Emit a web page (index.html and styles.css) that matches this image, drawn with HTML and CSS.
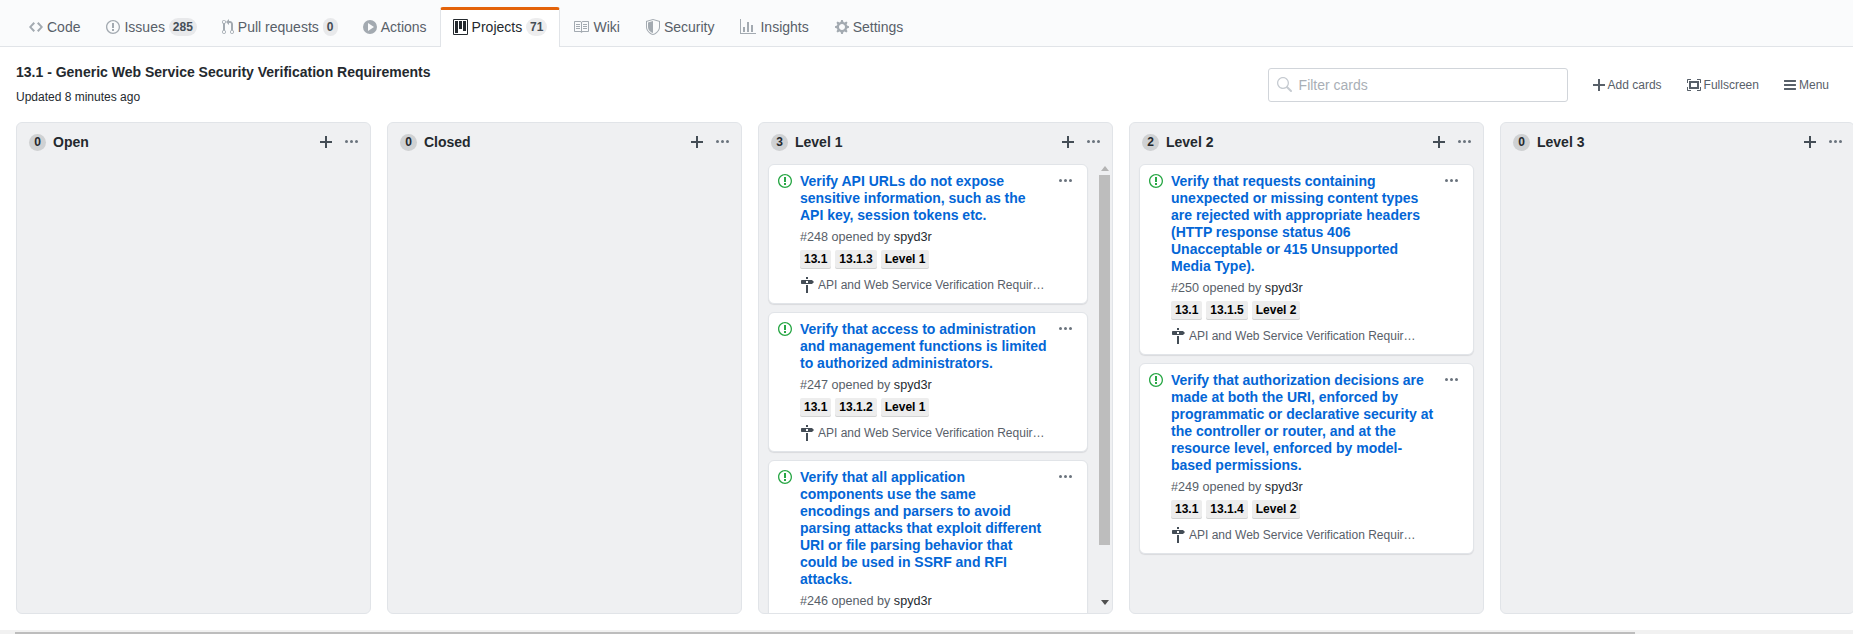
FILE: index.html
```html
<!DOCTYPE html>
<html>
<head>
  <title>13.1 - Generic Web Service Security Verification Requirements</title>
  <link rel="stylesheet" href="styles.css">
</head>
<body>
  <svg class="sprite">
    <symbol id="i-code" viewBox="0 0 14 16"><path d="M9.5 3L8 4.5 11.5 8 8 11.5 9.5 13 14 8 9.5 3zm-5 0L0 8l4.5 5L6 11.5 2.5 8 6 4.5 4.5 3z"/></symbol>
    <symbol id="i-issue" viewBox="0 0 14 16"><path fill-rule="evenodd" d="M7 2.3c3.14 0 5.7 2.56 5.7 5.7s-2.56 5.7-5.7 5.7A5.71 5.71 0 0 1 1.3 8c0-3.14 2.56-5.7 5.7-5.7zM7 1C3.14 1 0 4.14 0 8s3.14 7 7 7 7-3.14 7-7-3.14-7-7-7zm1 3H6v5h2V4zm0 6H6v2h2v-2z"/></symbol>
    <symbol id="i-pr" viewBox="0 0 12 16"><path fill-rule="evenodd" d="M11 11.28V5c-.03-.78-.34-1.47-.94-2.06C9.46 2.35 8.78 2.03 8 2H7V0L4 3l3 3V4h1c.27.02.48.11.69.31.21.2.3.42.31.69v6.28A1.993 1.993 0 0 0 10 15a1.993 1.993 0 0 0 1-3.72zm-1 2.92c-.66 0-1.2-.55-1.2-1.2 0-.65.55-1.2 1.2-1.2.65 0 1.2.55 1.2 1.2 0 .65-.55 1.2-1.2 1.2zM4 3c0-1.11-.89-2-2-2a1.993 1.993 0 0 0-1 3.72v6.56A1.993 1.993 0 0 0 2 15a1.993 1.993 0 0 0 1-3.72V4.72c.59-.34 1-.98 1-1.72zm-.8 10c0 .66-.55 1.2-1.2 1.2-.65 0-1.2-.55-1.2-1.2 0-.65.55-1.2 1.2-1.2.65 0 1.2.55 1.2 1.2zM2 4.2C1.34 4.2.8 3.65.8 3c0-.65.55-1.2 1.2-1.2.65 0 1.2.55 1.2 1.2 0 .65-.55 1.2-1.2 1.2z"/></symbol>
    <symbol id="i-play" viewBox="0 0 14 16"><path fill-rule="evenodd" d="M14 8A7 7 0 1 1 0 8a7 7 0 0 1 14 0zM5 12l6-4-6-4v8z"/></symbol>
    <symbol id="i-project" viewBox="0 0 15 16"><path fill-rule="evenodd" d="M10 12h3V2h-3v10zm-4-2h3V2H6v8zm-4 4h3V2H2v12zm-1 1h13V1H1v14zM14 0H1a1 1 0 0 0-1 1v14a1 1 0 0 0 1 1h13a1 1 0 0 0 1-1V1a1 1 0 0 0-1-1z"/></symbol>
    <symbol id="i-book" viewBox="0 0 16 16"><path fill-rule="evenodd" d="M3 5h4v1H3V5zm0 3h4V7H3v1zm0 2h4V9H3v1zm11-5h-4v1h4V5zm0 2h-4v1h4V7zm0 2h-4v1h4V9zm2-6v9c0 .55-.45 1-1 1H9.5l-1 1-1-1H2c-.55 0-1-.45-1-1V3c0-.55.45-1 1-1h5.5l1 1 1-1H15c.55 0 1 .45 1 1zm-8 .5L7.5 3H2v9h6V3.5zm7-.5H9.5l-.5.5V12h6V3z"/></symbol>
    <symbol id="i-shield" viewBox="0 0 14 16"><path fill-rule="evenodd" d="M0 2l7-2 7 2v6.02C14 12.69 8.69 16 7 16c-1.69 0-7-3.31-7-7.98V2zm1 .75L7 1l6 1.75v5.268C13 12.104 8.449 15 7 15c-1.449 0-6-2.896-6-6.982V2.75zm1 .75L7 2v12c-1.207 0-5-2.482-5-5.985V3.5z"/></symbol>
    <symbol id="i-graph" viewBox="0 0 16 16"><path d="M16 14v1H0V0h1v14h15zM5 13H3V8h2v5zm4 0H7V3h2v10zm4 0h-2V6h2v7z"/></symbol>
    <symbol id="i-gear" viewBox="0 0 14 16"><path fill-rule="evenodd" d="M14 8.77v-1.6l-1.94-.64-.45-1.09.88-1.84-1.13-1.13-1.81.91-1.09-.45-.69-1.92h-1.6l-.63 1.94-1.11.45-1.84-.88-1.13 1.13.91 1.81-.45 1.09L0 7.23v1.59l1.94.64.45 1.09-.88 1.84 1.13 1.13 1.81-.91 1.09.45.69 1.92h1.59l.63-1.94 1.11-.45 1.84.88 1.13-1.13-.92-1.81.47-1.09L14 8.75v.02zM7 11c-1.66 0-3-1.34-3-3s1.34-3 3-3 3 1.34 3 3-1.34 3-3 3z"/></symbol>
    <symbol id="i-kebab" viewBox="0 0 13 16"><path d="M1.5 9a1.5 1.5 0 1 0 0-3 1.5 1.5 0 0 0 0 3zm5 0a1.5 1.5 0 1 0 0-3 1.5 1.5 0 0 0 0 3zM13 7.5a1.5 1.5 0 1 1-3 0 1.5 1.5 0 0 1 3 0z"/></symbol>
    <symbol id="i-plus" viewBox="0 0 12 16"><path d="M12 9H7v5H5V9H0V7h5V2h2v5h5v2z"/></symbol>
    <symbol id="i-milestone" viewBox="0 0 14 16"><path fill-rule="evenodd" d="M8 2H6V0h2v2zm4 5H2c-.55 0-1-.45-1-1V4c0-.55.45-1 1-1h10l2 2-2 2zM8 4H6v2h2V4zM6 16h2V8H6v8z"/></symbol>
    <symbol id="i-search" viewBox="0 0 16 16"><path fill-rule="evenodd" d="M15.7 13.3l-3.81-3.83A5.93 5.93 0 0 0 13 6c0-3.31-2.69-6-6-6S1 2.69 1 6s2.69 6 6 6c1.3 0 2.48-.41 3.47-1.11l3.83 3.81c.19.2.45.3.7.3.25 0 .52-.09.7-.3a.996.996 0 0 0 0-1.41v.01zM7 10.7c-2.59 0-4.7-2.11-4.7-4.7 0-2.59 2.11-4.7 4.7-4.7 2.59 0 4.7 2.11 4.7 4.7 0 2.59-2.11 4.7-4.7 4.7z"/></symbol>
    <symbol id="i-bars" viewBox="0 0 12 16"><path d="M11.41 9H.59C0 9 0 8.59 0 8c0-.59 0-1 .59-1H11.4c.59 0 .59.41.59 1 0 .59 0 1-.59 1h.01zm0-4H.59C0 5 0 4.59 0 4c0-.59 0-1 .59-1H11.4c.59 0 .59.41.59 1 0 .59 0 1-.59 1h.01zM.59 11H11.4c.59 0 .59.41.59 1 0 .59 0 1-.59 1H.59C0 13 0 12.59 0 12c0-.59 0-1 .59-1z"/></symbol>
    <symbol id="i-full" viewBox="0 0 14 16"><path fill-rule="evenodd" d="M13 10h1v3c0 .547-.453 1-1 1h-3v-1h3v-3zM1 10H0v3c0 .547.453 1 1 1h3v-1H1v-3zm0-7h3V2H1c-.547 0-1 .453-1 1v3h1V3zm1 1h10v8H2V4zm2 6h6V6H4v4zm6-8v1h3v3h1V3c0-.547-.453-1-1-1h-3z"/></symbol>
  </svg>

  <div class="page">
    <nav class="tabs">
      <a class="tab"><svg class="tab-icon w14"><use href="#i-code"/></svg>Code</a>
      <a class="tab"><svg class="tab-icon w14"><use href="#i-issue"/></svg>Issues <span class="counter">285</span></a>
      <a class="tab"><svg class="tab-icon w12"><use href="#i-pr"/></svg>Pull requests <span class="counter">0</span></a>
      <a class="tab"><svg class="tab-icon w14"><use href="#i-play"/></svg>Actions</a>
      <a class="tab selected"><svg class="tab-icon w15"><use href="#i-project"/></svg>Projects <span class="counter">71</span></a>
      <a class="tab"><svg class="tab-icon w16"><use href="#i-book"/></svg>Wiki</a>
      <a class="tab"><svg class="tab-icon w14"><use href="#i-shield"/></svg>Security</a>
      <a class="tab"><svg class="tab-icon w16"><use href="#i-graph"/></svg>Insights</a>
      <a class="tab"><svg class="tab-icon w14"><use href="#i-gear"/></svg>Settings</a>
    </nav>

    <header class="board-head">
      <div>
        <h1 class="board-title">13.1 - Generic Web Service Security Verification Requirements</h1>
        <p class="board-updated">Updated 8 minutes ago</p>
      </div>
      <div class="board-tools">
        <label class="filter">
          <svg class="filter-icon"><use href="#i-search"/></svg>
          <input class="filter-input" type="text" placeholder="Filter cards">
        </label>
        <a class="tool"><svg class="tool-icon w12"><use href="#i-plus"/></svg>Add cards</a>
        <a class="tool"><svg class="tool-icon w14"><use href="#i-full"/></svg>Fullscreen</a>
        <a class="tool"><svg class="tool-icon w12"><use href="#i-bars"/></svg>Menu</a>
      </div>
    </header>

    <main class="board">
      <section class="column">
        <div class="column-head">
          <span class="column-count">0</span><h2 class="column-name">Open</h2>
          <svg class="column-plus"><use href="#i-plus"/></svg><svg class="kebab"><use href="#i-kebab"/></svg>
        </div>
      </section>

      <section class="column">
        <div class="column-head">
          <span class="column-count">0</span><h2 class="column-name">Closed</h2>
          <svg class="column-plus"><use href="#i-plus"/></svg><svg class="kebab"><use href="#i-kebab"/></svg>
        </div>
      </section>

      <section class="column">
        <div class="column-head">
          <span class="column-count">3</span><h2 class="column-name">Level 1</h2>
          <svg class="column-plus"><use href="#i-plus"/></svg><svg class="kebab"><use href="#i-kebab"/></svg>
        </div>
        <div class="column-body">
          <div class="cards has-scroll">
            <article class="card">
              <svg class="card-status"><use href="#i-issue"/></svg>
              <div class="card-main">
                <a class="card-title">Verify API URLs do not expose sensitive information, such as the API key, session tokens etc.</a>
                <p class="card-meta">#248 opened by <span class="card-user">spyd3r</span></p>
                <div class="labels"><span class="label">13.1</span><span class="label">13.1.3</span><span class="label">Level 1</span></div>
                <div class="card-milestone"><svg class="milestone-icon"><use href="#i-milestone"/></svg><span class="milestone-name">API and Web Service Verification Requirements</span></div>
              </div>
              <svg class="kebab card-kebab"><use href="#i-kebab"/></svg>
            </article>
            <article class="card">
              <svg class="card-status"><use href="#i-issue"/></svg>
              <div class="card-main">
                <a class="card-title">Verify that access to administration and management functions is limited to authorized administrators.</a>
                <p class="card-meta">#247 opened by <span class="card-user">spyd3r</span></p>
                <div class="labels"><span class="label">13.1</span><span class="label">13.1.2</span><span class="label">Level 1</span></div>
                <div class="card-milestone"><svg class="milestone-icon"><use href="#i-milestone"/></svg><span class="milestone-name">API and Web Service Verification Requirements</span></div>
              </div>
              <svg class="kebab card-kebab"><use href="#i-kebab"/></svg>
            </article>
            <article class="card">
              <svg class="card-status"><use href="#i-issue"/></svg>
              <div class="card-main">
                <a class="card-title">Verify that all application components use the same encodings and parsers to avoid parsing attacks that exploit different URI or file parsing behavior that could be used in SSRF and RFI attacks.</a>
                <p class="card-meta">#246 opened by <span class="card-user">spyd3r</span></p>
              </div>
              <svg class="kebab card-kebab"><use href="#i-kebab"/></svg>
            </article>
          </div>
          <div class="vscroll">
            <span class="vscroll-up"></span>
            <span class="vscroll-thumb"></span>
            <span class="vscroll-down"></span>
          </div>
        </div>
      </section>

      <section class="column">
        <div class="column-head">
          <span class="column-count">2</span><h2 class="column-name">Level 2</h2>
          <svg class="column-plus"><use href="#i-plus"/></svg><svg class="kebab"><use href="#i-kebab"/></svg>
        </div>
        <div class="column-body">
          <div class="cards">
            <article class="card">
              <svg class="card-status"><use href="#i-issue"/></svg>
              <div class="card-main">
                <a class="card-title">Verify that requests containing unexpected or missing content types are rejected with appropriate headers (HTTP response status 406 Unacceptable or 415 Unsupported Media Type).</a>
                <p class="card-meta">#250 opened by <span class="card-user">spyd3r</span></p>
                <div class="labels"><span class="label">13.1</span><span class="label">13.1.5</span><span class="label">Level 2</span></div>
                <div class="card-milestone"><svg class="milestone-icon"><use href="#i-milestone"/></svg><span class="milestone-name">API and Web Service Verification Requirements</span></div>
              </div>
              <svg class="kebab card-kebab"><use href="#i-kebab"/></svg>
            </article>
            <article class="card">
              <svg class="card-status"><use href="#i-issue"/></svg>
              <div class="card-main">
                <a class="card-title">Verify that authorization decisions are made at both the URI, enforced by programmatic or declarative security at the controller or router, and at the resource level, enforced by model-based permissions.</a>
                <p class="card-meta">#249 opened by <span class="card-user">spyd3r</span></p>
                <div class="labels"><span class="label">13.1</span><span class="label">13.1.4</span><span class="label">Level 2</span></div>
                <div class="card-milestone"><svg class="milestone-icon"><use href="#i-milestone"/></svg><span class="milestone-name">API and Web Service Verification Requirements</span></div>
              </div>
              <svg class="kebab card-kebab"><use href="#i-kebab"/></svg>
            </article>
          </div>
        </div>
      </section>

      <section class="column">
        <div class="column-head">
          <span class="column-count">0</span><h2 class="column-name">Level 3</h2>
          <svg class="column-plus"><use href="#i-plus"/></svg><svg class="kebab"><use href="#i-kebab"/></svg>
        </div>
      </section>
    </main>

    <div class="hscroll"><span class="hscroll-thumb"></span></div>
  </div>
</body>
</html>
```

FILE: styles.css
```css
* {
  box-sizing: border-box;
}
body {
  margin: 0;
  font-family: "Liberation Sans", Arial, sans-serif;
  font-size: 14px;
  color: #24292e;
  background-color: #fff;
  overflow: hidden;
}
.sprite {
  display: none;
}
.page {
  display: flex;
  flex-direction: column;
  height: 100vh;
}

/* repo tabs */
.tabs {
  display: flex;
  height: 47px;
  padding: 7px 16px 0;
  background-color: #fafbfc;
  border-bottom: 1px solid #e1e4e8;
  flex: none;
}
.tab {
  display: flex;
  align-items: center;
  height: 40px;
  padding: 0 12px 3px;
  border: 1px solid transparent;
  border-top-width: 3px;
  border-bottom: 0;
  color: #586069;
  white-space: pre;
}
.tab.selected {
  background-color: #fff;
  color: #24292e;
  border-color: #e1e4e8;
  border-top-color: #e36209;
  border-radius: 3px 3px 0 0;
}
.tab-icon {
  height: 16px;
  margin-right: 4px;
  fill: #a3aab1;
  flex: none;
}
.tab.selected .tab-icon {
  fill: #24292e;
}
.w12 { width: 12px; }
.w14 { width: 14px; }
.w15 { width: 15px; }
.w16 { width: 16px; }
.counter {
  display: inline-block;
  min-width: 15px;
  margin-right: -1px;
  padding: 2px 4px;
  font-size: 12px;
  font-weight: bold;
  line-height: 14px;
  text-align: center;
  color: #444d56;
  background-color: rgba(27, 31, 35, 0.08);
  border-radius: 20px;
}
.tab.selected .counter {
  margin-right: 0;
}

/* title row */
.board-head {
  display: flex;
  justify-content: space-between;
  height: 75px;
  padding: 15px 24px 0 16px;
  flex: none;
}
.board-title {
  margin: 0;
  font-size: 14px;
  line-height: 21px;
  font-weight: bold;
}
.board-updated {
  margin: 5px 0 0;
  font-size: 12px;
  line-height: 18px;
}
.board-tools {
  display: flex;
  align-items: flex-start;
  padding-top: 6px;
}
.filter {
  display: flex;
  align-items: center;
  width: 300px;
  height: 34px;
  padding-left: 7px;
  margin-right: 25px;
  border: 1px solid #d1d5da;
  border-radius: 3px;
  background-color: #fff;
}
.filter-icon {
  width: 16px;
  height: 16px;
  fill: #c6cbd1;
  flex: none;
}
.filter-input {
  flex: 1;
  min-width: 0;
  margin-left: 7px;
  border: 0;
  padding: 0;
  outline: none;
  font-family: inherit;
  font-size: 14px;
  background: transparent;
}
.filter-input::placeholder {
  color: #a9afb6;
}
.tool {
  display: flex;
  align-items: center;
  height: 34px;
  margin-left: 25px;
  font-size: 12px;
  color: #586069;
}
.filter + .tool {
  margin-left: 0;
}
.tool-icon {
  height: 16px;
  margin-right: 3px;
  fill: #586069;
  flex: none;
}

/* board */
.board {
  display: flex;
  gap: 16px;
  flex: 1;
  min-height: 0;
  padding: 0 16px;
  margin-bottom: 16px;
  overflow: hidden;
}
.column {
  display: flex;
  flex-direction: column;
  width: 355px;
  flex: none;
  background-color: #eff0f2;
  border: 1px solid #e1e4e8;
  border-radius: 6px;
  overflow: hidden;
}
.column-head {
  display: flex;
  align-items: center;
  height: 38px;
  margin-bottom: 3px;
  padding: 0 12px;
  flex: none;
}
.column-count {
  width: 17px;
  height: 17px;
  font-size: 12px;
  font-weight: bold;
  line-height: 17px;
  text-align: center;
  background-color: rgba(27, 31, 35, 0.15);
  border-radius: 50%;
  flex: none;
}
.column-name {
  flex: 1;
  margin: 0 0 0 7px;
  font-size: 14px;
  font-weight: bold;
}
.column-plus {
  width: 12px;
  height: 16px;
  margin-right: 13px;
  fill: #444d56;
  flex: none;
}
.kebab {
  width: 13px;
  height: 16px;
  fill: #6a737d;
  flex: none;
}
.column-body {
  display: flex;
  flex: 1;
  min-height: 0;
}
.cards {
  display: flex;
  flex-direction: column;
  gap: 8px;
  flex: 1;
  min-width: 0;
  padding: 0 9px;
  overflow: hidden;
}

/* cards */
.card {
  display: flex;
  flex: none;
  padding: 8px 15px 9px 9px;
  background-color: #fff;
  border: 1px solid #e1e4e8;
  border-radius: 6px;
  box-shadow: 0 1px 1px rgba(27, 31, 35, 0.1);
}
.card-status {
  width: 14px;
  height: 16px;
  margin-right: 8px;
  fill: #28a745;
  flex: none;
}
.card-main {
  flex: 1;
  min-width: 0;
  padding-right: 9px;
}
.has-scroll .card-main {
  padding-right: 11px;
}
.card-title {
  display: block;
  font-size: 14px;
  font-weight: bold;
  line-height: 17px;
  color: #0366d6;
}
.card-meta {
  margin: 4px 0 0;
  font-size: 12.6px;
  line-height: 18px;
  color: #586069;
}
.card-user {
  color: #24292e;
}
.labels {
  display: flex;
  gap: 4px;
  margin-top: 4px;
}
.label {
  height: 19px;
  padding: 0 4px;
  font-size: 12px;
  font-weight: bold;
  line-height: 18px;
  color: #000;
  background-color: #ededed;
  border-radius: 2px;
  box-shadow: inset 0 -1px 0 rgba(27, 31, 35, 0.12);
}
.card-milestone {
  display: flex;
  align-items: center;
  margin-top: 7px;
  height: 18px;
  font-size: 12px;
  color: #586069;
}
.milestone-icon {
  width: 14px;
  height: 16px;
  margin-right: 4px;
  fill: #444d56;
  flex: none;
}
.milestone-name {
  width: 228px;
  white-space: nowrap;
  overflow: hidden;
  text-overflow: ellipsis;
  flex: none;
}

/* scrollbars */
.vscroll {
  display: flex;
  flex-direction: column;
  align-items: center;
  width: 11px;
  margin: 0 2px;
  flex: none;
}
.vscroll-up {
  width: 0;
  height: 0;
  margin: 2px 0 4px;
  border: 4px solid transparent;
  border-top: 0;
  border-bottom: 5px solid #b4b4b4;
}
.vscroll-thumb {
  width: 11px;
  height: 370px;
  background-color: #bdbdbd;
}
.vscroll-down {
  width: 0;
  height: 0;
  margin-top: 55px;
  border: 4px solid transparent;
  border-bottom: 0;
  border-top: 5px solid #505050;
}
.hscroll {
  height: 4px;
  padding: 2px 0 0 15px;
  background-color: #f1f1f1;
  flex: none;
}
.hscroll-thumb {
  display: block;
  width: 1620px;
  height: 2px;
  background-color: #bdbdbd;
}
```
